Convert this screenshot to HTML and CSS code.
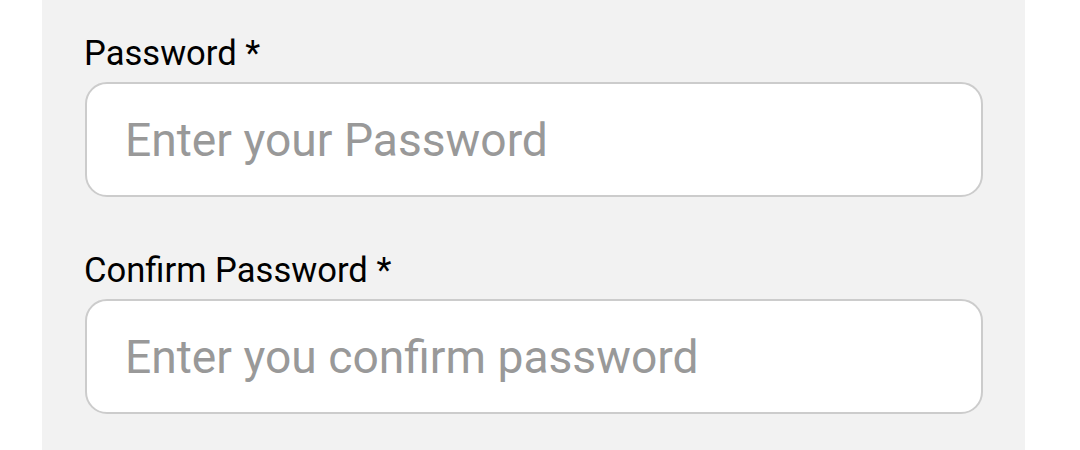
FILE: index.html
```html
<!DOCTYPE html>
<html lang="en">
<head>
<meta charset="utf-8">
<title>Password</title>
<link rel="stylesheet" href="styles.css">
</head>
<body>
<div class="panel">
  <div class="field field-first">
    <label class="label" for="pw">Password *</label>
    <input class="input" id="pw" type="password" placeholder="Enter your Password">
  </div>
  <div class="field">
    <label class="label" for="cpw">Confirm Password *</label>
    <input class="input" id="cpw" type="password" placeholder="Enter you confirm password">
  </div>
</div>
</body>
</html>
```
FILE: styles.css
```css
html, body {
  margin: 0;
  padding: 0;
  background: #ffffff;
}
body {
  font-family: Roboto, "Liberation Sans", sans-serif;
  height: 450px;
  overflow: hidden;
}
.panel {
  margin-left: 42px;
  width: 983px;
  height: 450px;
  box-sizing: border-box;
  background: #f2f2f2;
  padding: 33px 43px 0 43px;
  display: flex;
  flex-direction: column;
  gap: 53px;
}
.field {
  display: flex;
  flex-direction: column;
  gap: 9px;
}
.label {
  font-size: 34.6px;
  line-height: 40px;
  color: #000000;
  margin-left: -1px;
}
.input {
  box-sizing: border-box;
  width: 898px;
  height: 115px;
  border: 2px solid #cccccc;
  border-radius: 22px;
  background: #ffffff;
  padding: 0 38px;
  font-family: Roboto, "Liberation Sans", sans-serif;
  font-size: 46.2px;
  color: #333;
  outline: none;
}
.input::placeholder {
  color: #999999;
  opacity: 1;
}
```
